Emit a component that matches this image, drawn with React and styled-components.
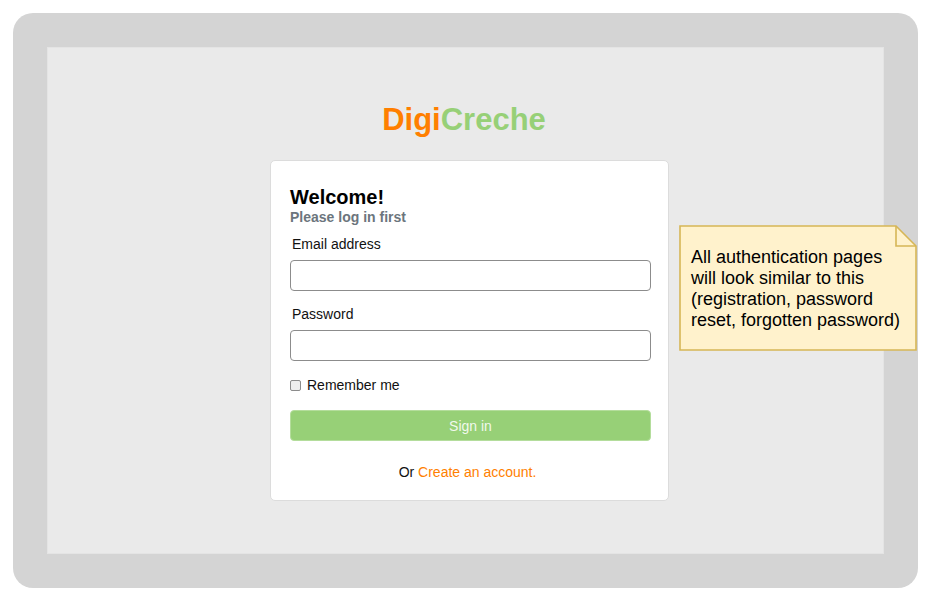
import React from "react";
import styled, { createGlobalStyle } from "styled-components";

const Global = createGlobalStyle`
  html, body {
    margin: 0;
    padding: 0;
    background: #ffffff;
    font-family: "Liberation Sans", Arial, sans-serif;
  }
  * { box-sizing: border-box; }
`;

const App = () => {
  return (
    <>
      <Global />
      <Frame>
        <Screen>
          <Logo>
            <span className="digi">Digi</span>
            <span className="creche">Creche</span>
          </Logo>
          <Card>
            <Title>Welcome!</Title>
            <Subtitle>Please log in first</Subtitle>
            <Label>Email address</Label>
            <Input type="email" />
            <Label>Password</Label>
            <Input type="password" />
            <CheckRow>
              <Box />
              <span>Remember me</span>
            </CheckRow>
            <Button>Sign in</Button>
            <Footer>
              Or <a>Create an account.</a>
            </Footer>
          </Card>
        </Screen>
        <Note>
          <svg width="238" height="126" viewBox="0 0 238 126">
            <path
              d="M1 1 H217 L237 21 V125 H1 Z"
              fill="#fff2cc"
              stroke="#d6b656"
              strokeWidth="1.6"
            />
            <path
              d="M217 1 V21 H237"
              fill="none"
              stroke="#d6b656"
              strokeWidth="1.6"
            />
          </svg>
          <NoteText>
            All authentication pages
            <br />
            will look similar to this
            <br />
            (registration, password
            <br />
            reset, forgotten password)
          </NoteText>
        </Note>
      </Frame>
    </>
  );
};

export default App;

const Frame = styled.div`
  position: relative;
  margin: 13px 0 0 13px;
  width: 905px;
  height: 575px;
  background: #d4d4d4;
  border-radius: 20px;
  padding: 34px;
`;

const Screen = styled.div`
  width: 837px;
  height: 507px;
  background: #eaeaea;
  border: 1px solid #e4e4e4;
  padding-top: 54px;
  display: flex;
  flex-direction: column;
`;

const Logo = styled.div`
  font-size: 31px;
  line-height: 36px;
  font-weight: bold;
  text-align: center;
  padding-right: 3px;
  .digi {
    color: #ff7f00;
  }
  .creche {
    color: #97d077;
  }
`;

const Card = styled.div`
  margin: 22px 0 0 222px;
  width: 399px;
  background: #ffffff;
  border: 1px solid #dcdcdc;
  border-radius: 5px;
  padding: 24px 19px 20px 19px;
  display: flex;
  flex-direction: column;
`;

const Title = styled.div`
  font-size: 20px;
  line-height: 24px;
  font-weight: bold;
  color: #000;
`;

const Subtitle = styled.div`
  font-size: 14px;
  line-height: 16px;
  font-weight: bold;
  color: #6c757d;
`;

const Label = styled.div`
  margin-top: 11px;
  padding-left: 2px;
  font-size: 14px;
  line-height: 16px;
  color: #111;
  & + input {
    margin-top: 8px;
  }
`;

const Input = styled.input`
  display: block;
  width: 361px;
  height: 31px;
  margin: 0 0 4px 0;
  border: 1px solid #8c8c8c;
  border-radius: 4px;
  background: #fff;
  outline: none;
`;

const CheckRow = styled.div`
  margin-top: 12px;
  display: flex;
  align-items: center;
  font-size: 14px;
  line-height: 16px;
  color: #111;
  span {
    margin-left: 6px;
  }
`;

const Box = styled.div`
  width: 11px;
  height: 11px;
  border: 1px solid #8c8c8c;
  border-radius: 2px;
  background: #eeeeee;
`;

const Button = styled.div`
  margin-top: 17px;
  width: 361px;
  height: 31px;
  background: #97d077;
  border: 1px solid #b4dd9c;
  border-radius: 4px;
  color: rgba(255, 255, 255, 0.88);
  font-size: 14px;
  display: flex;
  align-items: center;
  justify-content: center;
`;

const Footer = styled.div`
  margin-top: 23px;
  padding-right: 4px;
  font-size: 14px;
  line-height: 16px;
  text-align: center;
  color: #111;
  a {
    color: #ff8000;
  }
`;

const Note = styled.div`
  position: absolute;
  left: 666px;
  top: 212px;
  width: 238px;
  height: 126px;
  svg {
    position: absolute;
    left: 0;
    top: 0;
  }
`;

const NoteText = styled.div`
  position: relative;
  height: 100%;
  padding-left: 12px;
  padding-top: 1px;
  display: flex;
  align-items: center;
  font-size: 18px;
  line-height: 21px;
  color: #000;
`;
